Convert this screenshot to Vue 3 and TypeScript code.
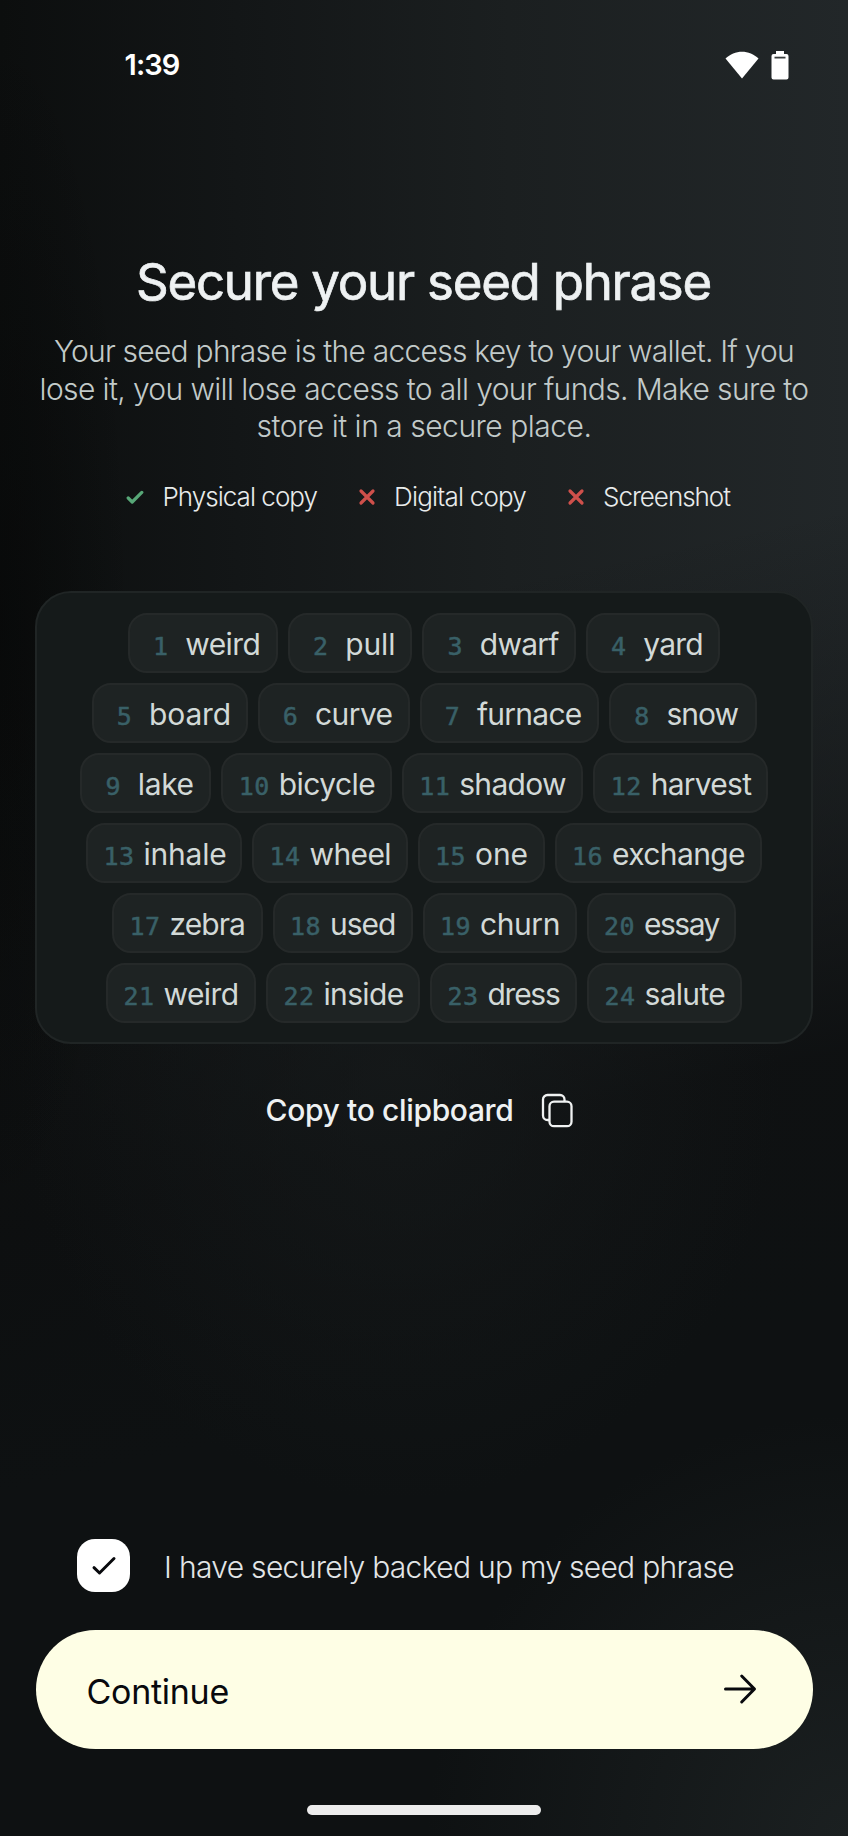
<script setup lang="ts">
import type { Directive } from 'vue'

interface Word { n: number; text: string; chip: number; ink: number }
interface Method { label: string; ok: boolean; width: number }

/* Tracks a text run so that it fills the given width. */
const vFit: Directive<HTMLElement, number> = {
  mounted(el, binding) {
    const natural = el.getBoundingClientRect().width
    const count = (el.textContent ?? '').length
    el.style.letterSpacing = `${(binding.value - natural) / count}px`
  },
}

const w = (n: number, text: string, chip: number, ink: number): Word => ({ n, text, chip, ink })

const rows: Word[][] = [
  [w(1, 'weird', 150, 75), w(2, 'pull', 124.5, 50), w(3, 'dwarf', 153.5, 79), w(4, 'yard', 134.5, 59.5)],
  [w(5, 'board', 156, 82), w(6, 'curve', 152, 77.5), w(7, 'furnace', 179.5, 104.5), w(8, 'snow', 147.5, 71.5)],
  [w(9, 'lake', 131, 56), w(10, 'bicycle', 170.5, 96.5), w(11, 'shadow', 181.5, 106.5), w(12, 'harvest', 174.5, 100.5)],
  [w(13, 'inhale', 156, 83), w(14, 'wheel', 155.5, 81.5), w(15, 'one', 127, 53), w(16, 'exchange', 207.5, 133)],
  [w(17, 'zebra', 150.5, 75.5), w(18, 'used', 140, 65.5), w(19, 'churn', 154, 80), w(20, 'essay', 149.5, 75)],
  [w(21, 'weird', 150, 75), w(22, 'inside', 154, 80), w(23, 'dress', 147, 72), w(24, 'salute', 155, 80.5)],
]

const methods: Method[] = [
  { label: 'Physical copy', ok: true, width: 154.5 },
  { label: 'Digital copy', ok: false, width: 132 },
  { label: 'Screenshot', ok: false, width: 127 },
]

const intro = [
  { text: 'Your seed phrase is the access key to your wallet. If you', width: 740 },
  { text: 'lose it, you will lose access to all your funds. Make sure to', width: 769 },
  { text: 'store it in a secure place.', width: 335 },
]
</script>

<template>
  <div class="screen">
    <header class="status">
      <span v-fit="55" class="time">1:39</span>
      <div class="status-icons">
        <svg width="34" height="28" viewBox="0 0 34 28"><path d="M17 27.5 L.5 7.6 C9.5-1.6 24.5-1.6 33.5 7.6Z" fill="#fff" /></svg>
        <svg width="18" height="29" viewBox="0 0 18 29">
          <path d="M5 0h8v3h2.500a2 2 0 0 1 2 2v21.500a2 2 0 0 1-2 2h-13a2 2 0 0 1-2-2V5a2 2 0 0 1 2-2H5z" fill="#fff" />
          <path d="M3.500 6.600h11" stroke="#3a3e3f" stroke-width="1.800" />
        </svg>
      </div>
    </header>

    <h1><span v-fit="575">Secure your seed phrase</span></h1>
    <p class="intro">
      <span v-for="line in intro" :key="line.text" class="line"><span v-fit="line.width">{{ line.text }}</span></span>
    </p>

    <ul class="methods">
      <li v-for="m in methods" :key="m.label">
        <svg v-if="m.ok" class="mark" width="18" height="18" viewBox="0 0 18 18"><path d="M2.200 10 6.200 14 15.800 4.400" stroke="#57a777" /></svg>
        <svg v-else class="mark" width="18" height="18" viewBox="0 0 18 18"><path d="M3 3 15 15M15 3 3 15" stroke="#cf504b" /></svg>
        <span v-fit="m.width">{{ m.label }}</span>
      </li>
    </ul>

    <section class="panel">
      <div v-for="(row, i) in rows" :key="i" class="row">
        <div v-for="word in row" :key="word.n" class="chip" :style="{ width: word.chip + 'px' }">
          <span class="num">{{ word.n }}</span>
          <span v-fit="word.ink" class="word">{{ word.text }}</span>
        </div>
      </div>
    </section>

    <button class="copy" type="button">
      <span v-fit="248">Copy to clipboard</span>
      <svg width="32" height="35" viewBox="0 0 32 35" fill="none" stroke="#f0f2f2" stroke-width="2.300">
        <path d="M8 27H6.500a4.500 4.500 0 0 1-4.500-4.500V6.500A4.500 4.500 0 0 1 6.500 2h12.500a4.500 4.500 0 0 1 4.500 4.500V8.500" />
        <rect x="8.500" y="8.700" width="22" height="24.500" rx="4.500" />
      </svg>
    </button>

    <div class="spacer"></div>

    <label class="confirm">
      <span class="box"><svg width="26" height="22" viewBox="0 0 26 22"><path d="M3 12.700 8.500 18 23 3.500" /></svg></span>
      <span v-fit="570" class="confirm-text">I have securely backed up my seed phrase</span>
    </label>

    <button class="continue" type="button">
      <span v-fit="142.5" class="continue-text">Continue</span>
      <svg width="34" height="32" viewBox="0 0 34 32"><path d="M2.500 16H31M18.700 3 31.500 16 18.700 29" /></svg>
    </button>
    <div class="home"></div>
  </div>
</template>

<style>
body { background: #0e1011; }
</style>

<style scoped>
.screen {
  box-sizing: border-box;
  width: 848px;
  height: 1836px;
  display: flex;
  flex-direction: column;
  align-items: center;
  overflow: hidden;
  font-family: Inter, "Liberation Sans", sans-serif;
  color: #eef1f2;
  white-space: nowrap;
  background:
    radial-gradient(ellipse 420px 420px at 100% 100%, #1b2021 0%, rgba(27, 32, 33, 0) 100%),
    radial-gradient(ellipse 380px 420px at 400px 1080px, rgba(24, 28, 29, .6) 0%, rgba(24, 28, 29, 0) 100%),
    radial-gradient(ellipse 130px 600px at 0 620px, rgba(5, 6, 6, .55) 0%, rgba(5, 6, 6, 0) 100%),
    linear-gradient(168deg, rgba(14, 16, 17, 0) 34%, rgba(15, 17, 18, .5) 49%, rgba(13, 15, 16, .92) 61%, #0e1112 74%),
    linear-gradient(90deg, #0c0e0e 0%, #131617 28%, #1b1f20 60%, #222729 100%);
}
.status {
  box-sizing: border-box;
  width: 100%;
  height: 130px;
  flex: none;
  padding: 0 59.5px 0 124.5px;
  display: flex;
  align-items: center;
  justify-content: space-between;
}
.time { font-size: 29px; font-weight: 600; color: #fff; margin-bottom: 2px; }
.status-icons { display: flex; gap: 12px; }
svg { display: block; flex: none; }
h1 {
  margin: 116px 0 0 -1px;
  height: 72px;
  line-height: 72px;
  font-size: 51px;
  font-weight: 400;
  -webkit-text-stroke: .7px currentColor;
}
.intro {
  margin: 15px 0 0;
  height: 114px;
  font-size: 30px;
  font-weight: 300;
  line-height: 37.7px;
  color: #c2cac9;
  text-align: center;
}
.line { display: block; }
.methods {
  margin: 33px 0 0;
  padding: 0 0 0 8px;
  height: 34px;
  list-style: none;
  display: flex;
  gap: 40.5px;
  font-size: 26px;
  font-weight: 300;
  line-height: 34px;
  color: #e8ebeb;
}
.methods li { display: flex; align-items: center; gap: 18.5px; }
.mark { fill: none; stroke-width: 3.2; stroke-linecap: round; stroke-linejoin: round; }
.panel {
  box-sizing: border-box;
  width: 778px;
  height: 453px;
  flex: none;
  margin-top: 77px;
  padding-top: 20px;
  border: 2px solid #202525;
  border-radius: 36px;
  background: #151a1a;
  display: flex;
  flex-direction: column;
  gap: 10px;
}
.row { display: flex; justify-content: center; gap: 10px; }
.chip {
  box-sizing: border-box;
  height: 60px;
  padding-left: 15px;
  border: 2px solid #252929;
  border-radius: 19px;
  background: #1e2323;
  display: flex;
  align-items: baseline;
  line-height: 58px;
}
.num {
  width: 32px;
  margin-right: 8.5px;
  flex: none;
  text-align: center;
  font-family: "DejaVu Sans Mono", "Liberation Mono", monospace;
  font-size: 25px;
  letter-spacing: .5px;
  color: #396067;
  -webkit-text-stroke: .5px #396067;
}
.word { font-size: 30px; font-weight: 400; color: #d2d9d7; }
button { border: 0; padding: 0; font-family: inherit; color: inherit; }
.copy {
  height: 50px;
  margin: 41px 0 0 -10px;
  display: flex;
  align-items: center;
  gap: 27px;
  background: none;
  font-size: 30px;
  font-weight: 450;
}
.spacer { flex: 1; }
.confirm {
  width: 694px;
  height: 53px;
  display: flex;
  align-items: center;
  gap: 34px;
  font-size: 30px;
  font-weight: 300;
  color: #e2e5e6;
}
.confirm-text { padding-top: 3px; }
.box {
  width: 53px;
  height: 53px;
  border-radius: 18px;
  background: #fff;
  display: grid;
  place-items: center;
}
.box svg, .continue svg { fill: none; stroke: #08090d; stroke-width: 3; stroke-linecap: round; stroke-linejoin: round; }
.continue svg { margin-bottom: 2px; }
.continue {
  box-sizing: border-box;
  width: 777px;
  height: 119px;
  flex: none;
  margin-top: 38px;
  padding: 0 56px 0 51px;
  border-radius: 60px;
  background: #fefee5;
  color: #08090d;
  display: flex;
  align-items: center;
  justify-content: space-between;
  font-size: 34px;
}
.continue-text { padding-top: 3px; }
.home {
  width: 234px;
  height: 10px;
  flex: none;
  margin: 56px 0 21px;
  border-radius: 5px;
  background: #ececec;
}
</style>
